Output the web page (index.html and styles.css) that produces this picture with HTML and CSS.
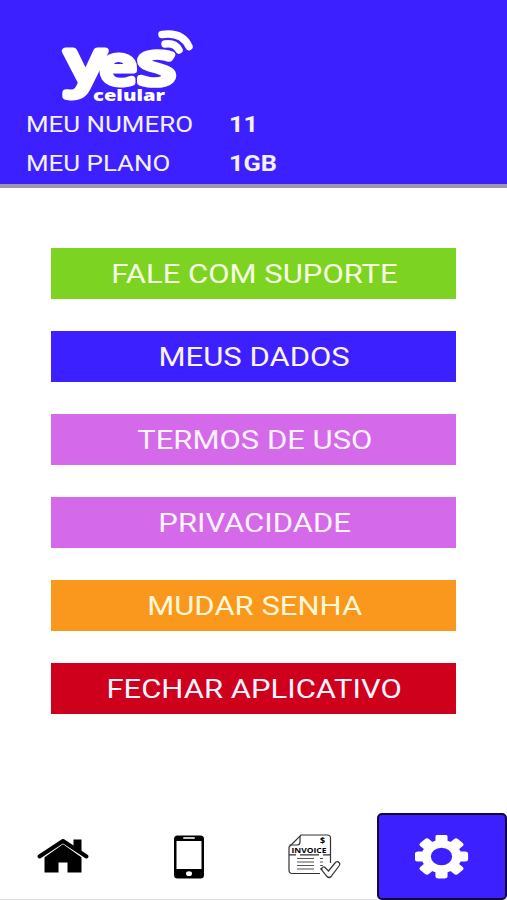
FILE: index.html
```
<!DOCTYPE html>
<html lang="pt-BR">
<head>
    <meta charset="UTF-8">
    <meta name="viewport" content="width=device-width, initial-scale=1.0">
    <title>Yes Celular</title>
    <link rel="stylesheet" href="styles.css">
</head>
<body>
    <header class="topo">
        <svg class="logo" viewBox="0 0 140 76" role="img" aria-label="yes celular">
            <g class="logo-yes">
                <text transform="translate(7 55) scale(1.45 1.13)">y</text>
                <text transform="translate(40.500 56) scale(1.25 1)">e</text>
                <text transform="translate(78.500 56) scale(1.5 1.12)">s</text>
            </g>
            <text class="logo-celular" x="34" y="73" textLength="72" lengthAdjust="spacingAndGlyphs">celular</text>
            <g class="logo-sinal">
                <path d="M103 6.500Q123 3.500 130 18.500"/>
                <path d="M106 16Q116 14.500 120 22"/>
            </g>
        </svg>
        <dl class="info">
            <div class="linha">
                <dt>MEU NUMERO</dt>
                <dd>11</dd>
            </div>
            <div class="linha">
                <dt>MEU PLANO</dt>
                <dd>1GB</dd>
            </div>
        </dl>
    </header>

    <main class="menu">
        <button class="botao verde"><span>FALE COM SUPORTE</span></button>
        <button class="botao azul"><span>MEUS DADOS</span></button>
        <button class="botao lilas"><span>TERMOS DE USO</span></button>
        <button class="botao lilas"><span>PRIVACIDADE</span></button>
        <button class="botao laranja"><span>MUDAR SENHA</span></button>
        <button class="botao vermelho"><span>FECHAR APLICATIVO</span></button>
    </main>

    <nav class="abas">
        <a class="aba">
            <!-- casa -->
            <svg width="54" height="44" viewBox="-1 0 54 44">
                <path d="M7.500 21 26 8.500 44.500 21V37.500H30.500V27.500H21.500V37.500H7.500Z"/>
                <path d="M2 22 26 5 50 22" fill="none" stroke="#fff" stroke-width="7"/>
                <path d="M36.500 4.500H44.500V18L36.500 12Z"/>
                <path d="M2.500 21.500 26 6 49.500 21.500" fill="none" stroke="#000" stroke-width="4" stroke-linecap="round" stroke-linejoin="round"/>
            </svg>
        </a>
        <a class="aba">
            <!-- celular -->
            <svg width="32" height="44" viewBox="0 0 32 44">
                <rect x="1" y="0.500" width="30" height="43" rx="3.500"/>
                <rect x="3.500" y="6" width="25" height="28" fill="#fff"/>
                <rect x="10" y="2" width="12" height="2" rx="1" fill="#ccc"/>
                <ellipse cx="16" cy="38.700" rx="3" ry="2.400" fill="#fff"/>
            </svg>
        </a>
        <a class="aba">
            <!-- fatura -->
            <svg width="54" height="46" viewBox="0 0 54 46">
                <path class="traco" d="M33 39.500H5Q2 39.500 2 36V13L14 1H40Q43.500 1 43.500 4V29"/>
                <path class="traco" d="M2.500 11H10Q13 11 13 8V2"/>
                <path class="traco" d="M2 20.800H9M13 20.800H32M36 20.800H43"/>
                <path class="traco cinza" d="M10 24.500H27M10 28H27M10 31.500H27M10 35H27M33 24.500H36M33 28H36M33 31.500H36M33 35H36"/>
                <text class="fatura" x="4.500" y="18.500" textLength="35" lengthAdjust="spacingAndGlyphs">INVOICE</text>
                <text class="cifrao" x="33" y="10">$</text>
                <path class="traco" d="M34 35Q36 31.500 38.500 34L41.500 37 48 29Q50 26.500 52 28.500 53.500 30 52 32L44 42.500Q42 44.500 40 42.500Z"/>
            </svg>
        </a>
        <a class="aba ativa">
            <!-- engrenagem -->
            <svg width="54" height="44" viewBox="-26.500 -21.500 54 44">
                <g transform="scale(1.21 1)" fill="#fff">
                    <circle r="16.500"/>
                    <rect x="-5" y="-22" width="10" height="44" rx="2.500"/>
                    <rect x="-5" y="-22" width="10" height="44" rx="2.500" transform="rotate(45)"/>
                    <rect x="-5" y="-22" width="10" height="44" rx="2.500" transform="rotate(90)"/>
                    <rect x="-5" y="-22" width="10" height="44" rx="2.500" transform="rotate(135)"/>
                    <circle r="8.800" fill="#3d20ff"/>
                </g>
            </svg>
        </a>
    </nav>
</body>
</html>
```
FILE: styles.css
```
* {
    box-sizing: border-box;
}
body {
    display: flex;
    flex-direction: column;
    height: 900px;
    margin: 0;
    background: #fff;
    font-family: Roboto, "Liberation Sans", sans-serif;
}

/* topo */
.topo {
    height: 188px;
    padding: 28px 0 0 26px;
    border-bottom: 4px solid #9c98aa;
    background: #3d20ff;
    color: #f4f0ff;
}
.logo {
    display: block;
    width: 140px;
    height: 76px;
    margin-left: 33px;
    overflow: visible;
}
.logo-yes {
    fill: #fff;
    stroke: #fff;
    stroke-width: 6;
    stroke-linecap: round;
    stroke-linejoin: round;
    font: 400 53px "Open Sans", sans-serif;
}
.logo-celular {
    fill: #fff;
    font: 800 15px "Open Sans", sans-serif;
}
.logo-sinal {
    fill: none;
    stroke: #fff;
    stroke-width: 7.5;
    stroke-linecap: round;
}
.info {
    margin: 0;
}
.linha {
    display: flex;
    height: 39px;
    font-size: 21.5px;
    line-height: 41px;
}
.linha dt {
    width: 203px;
    transform: scaleX(1.205);
    transform-origin: left;
}
.linha dd {
    margin: 0;
    font-weight: bold;
    transform: scaleX(1.18);
    transform-origin: left;
}

/* botoes */
.menu {
    display: flex;
    flex-direction: column;
    gap: 32px;
    padding: 60px 51px 0;
}
.botao {
    height: 51px;
    padding: 2px 0 0;
    border: 0;
    color: #fbf3ff;
    font: 25px Roboto, "Liberation Sans", sans-serif;
}
.botao span {
    display: inline-block;
    transform: translateX(1px) scaleX(1.24);
}
.verde {
    background: #7dd321;
    color: #f7ffe0;
}
.azul {
    background: #3d20ff;
}
.lilas {
    background: #d469ea;
}
.laranja {
    background: #f9981d;
    color: #fff8d8;
}
.vermelho {
    background: #ce001b;
}

/* abas */
.abas {
    display: grid;
    grid-template-columns: 126px 125px 126px 130px;
    height: 87px;
    margin-top: auto;
    border-bottom: 1px solid #ddd;
}
.aba {
    display: flex;
    align-items: center;
    justify-content: center;
}
.ativa {
    height: 87px;
    border: 2px solid #100838;
    border-radius: 5px;
    background: #3d20ff;
}
.traco {
    fill: none;
    stroke: #333;
    stroke-width: 1.2;
}
.cinza {
    stroke: #555;
}
.fatura {
    font: bold 7.5px "Open Sans", sans-serif;
}
.cifrao {
    font: bold 9px "Open Sans", sans-serif;
}
```
